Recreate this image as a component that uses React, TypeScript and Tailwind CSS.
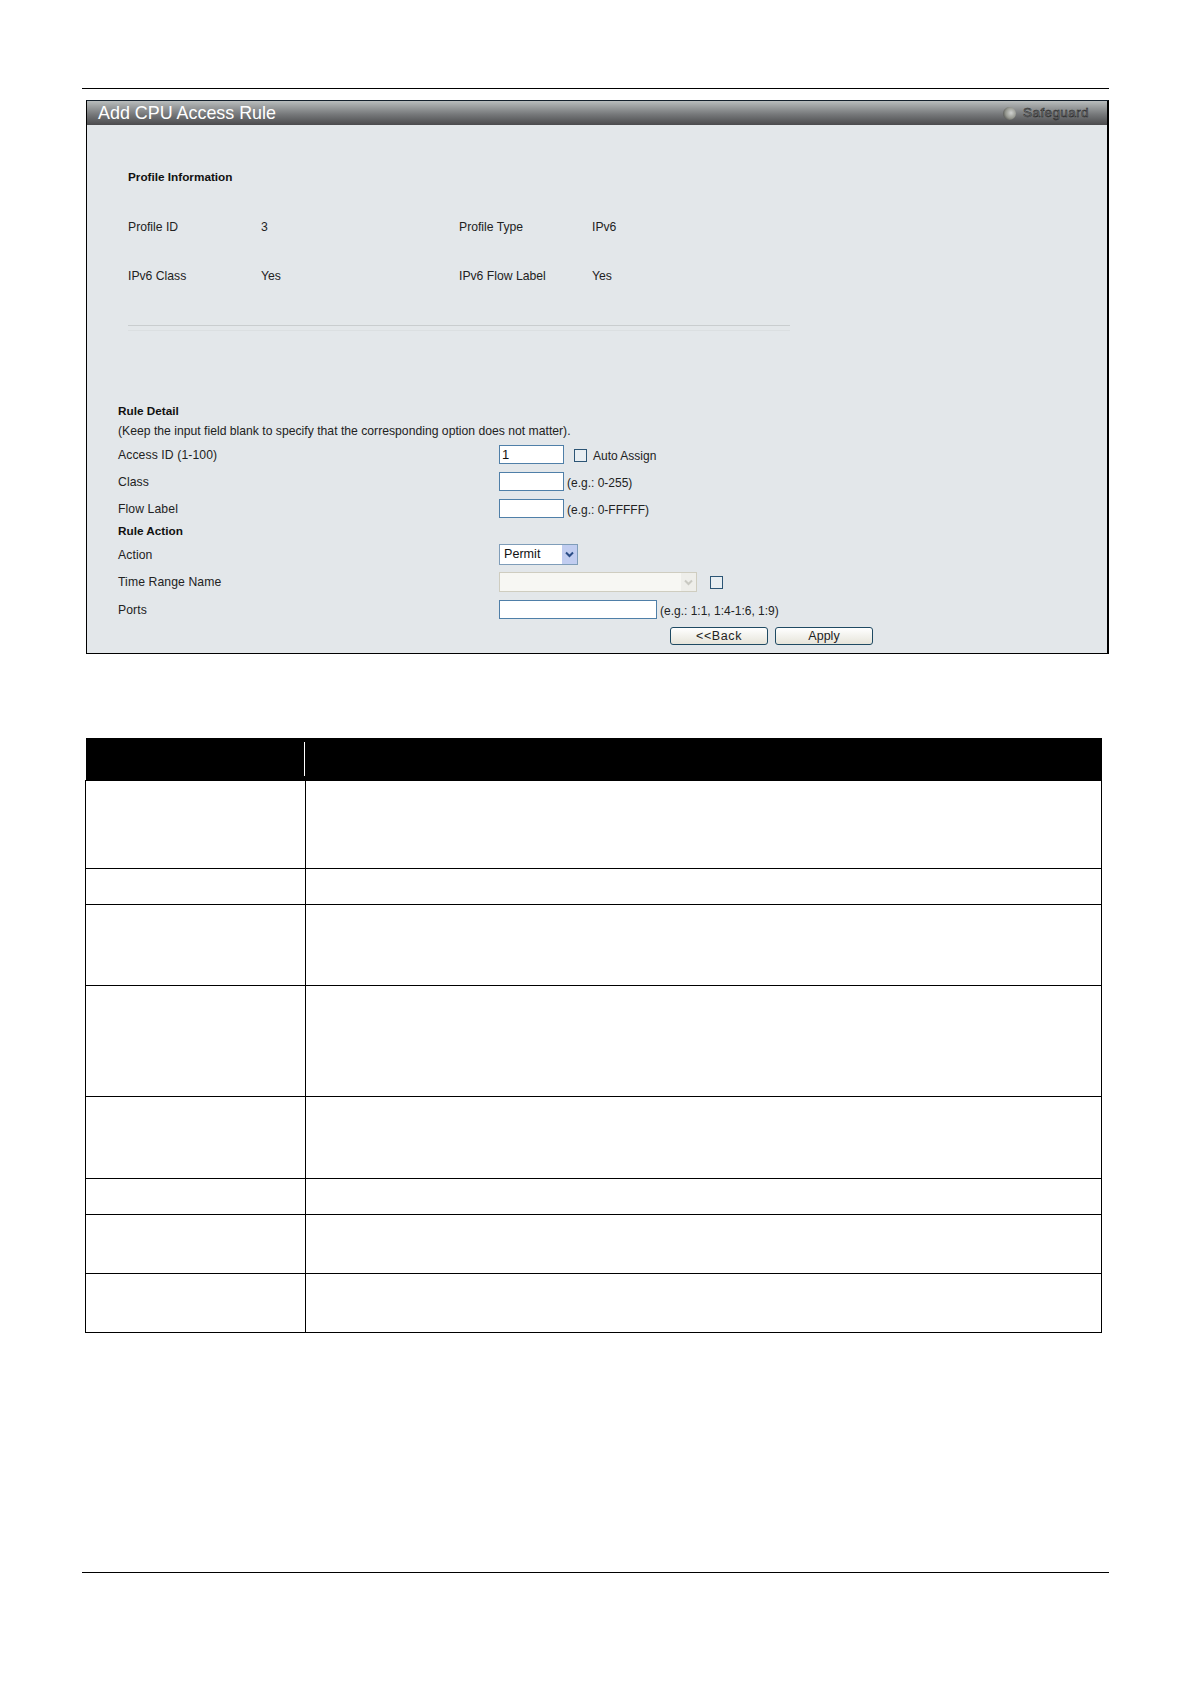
const font = "font-['Liberation_Sans',Arial,sans-serif]";

function FormRow({
  label,
  height,
  children,
}: {
  label: string;
  height: string;
  children?: React.ReactNode;
}) {
  return (
    <div className={`grid grid-cols-[381px_1fr] items-center ${height}`}>
      <span className="tracking-[0.1px]">{label}</span>
      <div className="flex items-center text-[12px] tracking-normal">{children}</div>
    </div>
  );
}

function TextInput({ width, value }: { width: string; value?: string }) {
  return (
    <input
      type="text"
      defaultValue={value}
      className={`mb-px h-[19px] ${width} border border-[#4f7fa8] bg-white px-[2px] text-[13px] text-[#111] outline-none`}
    />
  );
}

function Check({ className = "" }: { className?: string }) {
  return <span className={`block size-[13px] border border-[#2c5575] bg-[#e8eef2] ${className}`} />;
}

function Chevron({ color }: { color: string }) {
  return (
    <svg width="9" height="7" viewBox="0 0 9 7" fill="none">
      <path d="M1 1.5 4.5 5 8 1.5" stroke={color} strokeWidth="2" />
    </svg>
  );
}

function ActionButton({ children, className = "" }: { children: React.ReactNode; className?: string }) {
  return (
    <button
      type="button"
      className={`h-[18px] w-[98px] rounded-[3px] border border-[#1f4a63] bg-gradient-to-b from-white to-[#e6e4da] text-[12.5px] leading-none text-[#222] ${className}`}
    >
      {children}
    </button>
  );
}

const rows = ["h-[88px]", "h-[36px]", "h-[81px]", "h-[111px]", "h-[82px]", "h-[36px]", "h-[59px]", "h-[59px]"];

export default function App() {
  return (
    <div className={`${font} relative h-[1684px] w-[1191px] overflow-hidden bg-white`}>
      <div className="ml-[82px] mt-[88px] h-px w-[1027px] bg-black" />

      <section className="ml-[86px] mt-[11px] h-[554px] w-[1023px] border-b-2 border-l border-r-2 border-t border-black border-t-[#14202c] text-[12.2px] text-[#222]">
        <header className="relative flex h-[24px] items-center justify-between bg-gradient-to-b from-[#b9bdbd] via-[#77797b] via-55% to-[#4b4b4d] pl-[11px] pr-[18px]">
          <h1 className="pt-[1px] text-[17.9px] leading-none text-white">Add CPU Access Rule</h1>
          <div className="flex items-center gap-[7px] pt-[1px]">
            <span className="size-[13px] rounded-full bg-[radial-gradient(circle_at_62%_45%,#d0d2d0,#95978f_50%,#262626)]" />
            <span className="text-[13.5px] tracking-[0.4px] text-[#77797b] [-webkit-text-stroke:0.5px_#262626]">
              Safeguard
            </span>
          </div>
        </header>

        <div className="h-[200px] bg-[#e3e7ea] pl-[41px] pt-[42px]">
          <h2 className="h-[20px] text-[11.75px] font-bold leading-[20px] text-[#111]">Profile Information</h2>
          <div className="mt-[30px] grid h-[20px] grid-cols-[133px_198px_133px_1fr] items-center">
            <span>Profile ID</span>
            <span>3</span>
            <span>Profile Type</span>
            <span>IPv6</span>
          </div>
          <div className="mt-[29px] grid h-[20px] grid-cols-[133px_198px_133px_1fr] items-center">
            <span>IPv6 Class</span>
            <span>Yes</span>
            <span>IPv6 Flow Label</span>
            <span>Yes</span>
          </div>
        </div>

        <div className="h-[328px] bg-[#e3e7ea] pl-[31px]">
          <div className="ml-[10px] h-[6px] w-[662px] border-y border-y-[#c9cdcf] border-b-[#dbdfe1]" />

          <div className="mt-[70px] flex h-[20px] items-center text-[11.75px] font-bold text-[#111]">Rule Detail</div>
          <div className="flex h-[20px] items-center">
            (Keep the input field blank to specify that the corresponding option does not matter).
          </div>

          <FormRow label="Access ID (1-100)" height="h-[28px]">
            <TextInput width="w-[65px]" value="1" />
            <Check className="ml-[10px]" />
            <span className="ml-[6px] pt-[2px]">Auto Assign</span>
          </FormRow>
          <FormRow label="Class" height="h-[26px]">
            <TextInput width="w-[65px]" />
            <span className="ml-[3px] pt-[2px]">(e.g.: 0-255)</span>
          </FormRow>
          <FormRow label="Flow Label" height="h-[28px]">
            <TextInput width="w-[65px]" />
            <span className="ml-[3px] pt-[2px]">(e.g.: 0-FFFFF)</span>
          </FormRow>

          <div className="flex h-[16px] items-center text-[11.75px] font-bold text-[#111]">Rule Action</div>

          <FormRow label="Action" height="h-[32px]">
            <div className="relative mb-px">
              <select className="block h-[21px] w-[79px] appearance-none border border-[#7f9db9] bg-white pl-[4px] text-[12.6px] text-[#111] outline-none">
                <option>Permit</option>
              </select>
              <span className="absolute right-[1px] top-[1px] flex h-[19px] w-[15px] items-center justify-center bg-[#c1cdf0]">
                <Chevron color="#2b4d86" />
              </span>
            </div>
          </FormRow>
          <FormRow label="Time Range Name" height="h-[22px]">
            <div className="relative">
              <select
                disabled
                className="block h-[20px] w-[198px] appearance-none border border-[#cfcdc0] bg-[#f7f7f3] outline-none"
              />
              <span className="absolute right-[1px] top-[1px] flex h-[18px] w-[15px] items-center justify-center bg-[#eeeeea]">
                <Chevron color="#c9c9c2" />
              </span>
            </div>
            <Check className="ml-[13px]" />
          </FormRow>
          <FormRow label="Ports" height="h-[34px]">
            <TextInput width="w-[158px]" />
            <span className="ml-[3px] pt-[2px]">(e.g.: 1:1, 1:4-1:6, 1:9)</span>
          </FormRow>

          <div className="ml-[552px] flex gap-[7px]">
            <ActionButton className="tracking-[0.6px]">&lt;&lt;Back</ActionButton>
            <ActionButton>Apply</ActionButton>
          </div>
        </div>
      </section>

      <table className="ml-[85px] mt-[84px] w-[1017px] table-fixed border-collapse">
        <colgroup>
          <col className="w-[220px]" />
          <col />
        </colgroup>
        <thead>
          <tr className="h-[42px] bg-black">
            <th className="p-0">
              <div className="ml-auto mr-[1px] h-[34px] w-px bg-white" />
            </th>
            <th className="p-0" />
          </tr>
        </thead>
        <tbody>
          {rows.map((height, i) => (
            <tr key={i} className={height}>
              <td className="border border-black p-0" />
              <td className="border border-black p-0" />
            </tr>
          ))}
        </tbody>
      </table>

      <div className="ml-[82px] mt-[239px] h-px w-[1027px] bg-black" />
    </div>
  );
}
